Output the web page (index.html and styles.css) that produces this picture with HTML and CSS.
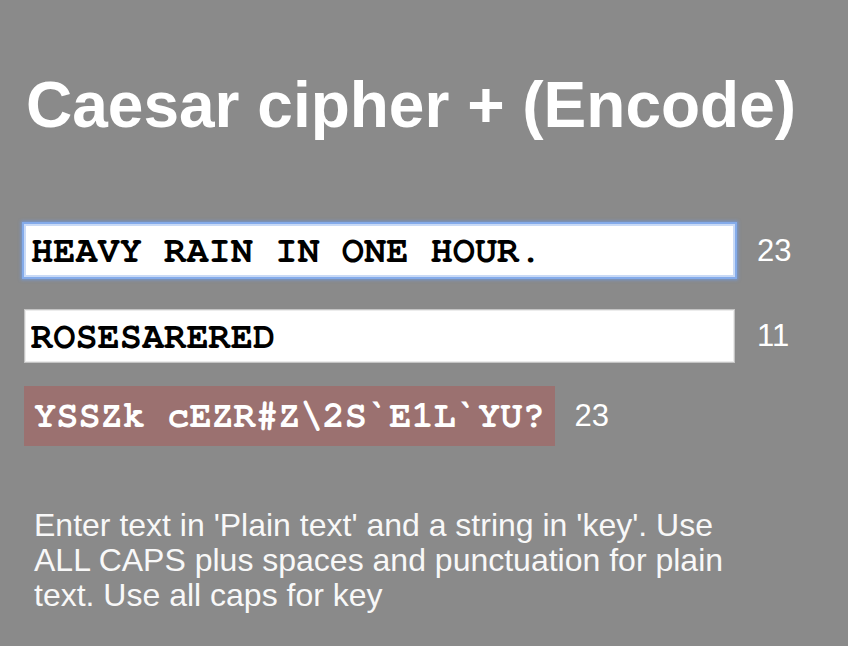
FILE: index.html
```html
<!DOCTYPE html>
<html>
<head>
<meta charset="utf-8">
<title>Caesar cipher + (Encode)</title>
<link rel="stylesheet" href="styles.css">
</head>
<body>
<main class="page">
  <h1 class="title">Caesar cipher + (Encode)</h1>
  <div class="row row-plain">
    <input class="field field-focus" type="text" value="HEAVY RAIN IN ONE HOUR.">
    <span class="count">23</span>
  </div>
  <div class="row row-key">
    <input class="field" type="text" value="ROSESARERED">
    <span class="count">11</span>
  </div>
  <div class="row row-out">
    <div class="output">YSSZk cEZR#Z\2S`E1L`YU?</div>
    <span class="count count-out">23</span>
  </div>
  <p class="help">Enter text in 'Plain text' and a string in 'key'. Use ALL CAPS plus spaces and punctuation for plain text. Use all caps for key</p>
</main>
</body>
</html>
```
FILE: styles.css
```css
html, body {
  margin: 0;
  padding: 0;
  background: #8a8a8a;
}

body {
  font-family: "Liberation Sans", Arial, sans-serif;
  color: #ffffff;
}

.page {
  padding: 0 0 0 24px;
  width: 824px;
  height: 646px;
  box-sizing: border-box;
  overflow: hidden;
}

.title {
  margin: 73px 0 0 2px;
  font-size: 64px;
  line-height: 64px;
  font-weight: bold;
  color: #ffffff;
}

.row {
  display: flex;
  align-items: center;
}

.row-plain {
  margin-top: 87px;
}

.row-key {
  margin-top: 32px;
}

.row-out {
  margin-top: 23px;
}

.field {
  box-sizing: border-box;
  width: 711px;
  height: 53px;
  margin: 0;
  padding: 0 0 0 6px;
  border: 1px solid #c4c4c4;
  box-shadow: inset 0 0 0 1px #ececec;
  background: #ffffff;
  font-family: "Nimbus Mono PS", "Nimbus Mono L", "FreeMono", "Courier", "Liberation Mono", monospace;
  font-weight: bold;
  font-size: 37px;
  color: #000000;
  outline: none;
}

.row-key .field {
  height: 54px;
}

.field-focus {
  border: 2px solid #c9daf6;
  padding-left: 5px;
  box-shadow: 0 0 0 2px #84abea, 0 0 3px 3px rgba(110, 155, 230, 0.75);
}

.count {
  margin-left: 22px;
  font-size: 31px;
  color: #ffffff;
}

.output {
  height: 60px;
  line-height: 60px;
  padding: 0 10px;
  background: #9b7170;
  font-family: "Nimbus Mono PS", "Nimbus Mono L", "FreeMono", "Courier", "Liberation Mono", monospace;
  font-weight: bold;
  font-size: 37px;
  color: #ffffff;
  white-space: pre;
}

.count-out {
  margin-left: 20px;
}

.help {
  margin: 62px 0 0 10px;
  width: 700px;
  font-size: 32px;
  line-height: 35px;
  color: #f8f8f8;
}
```
